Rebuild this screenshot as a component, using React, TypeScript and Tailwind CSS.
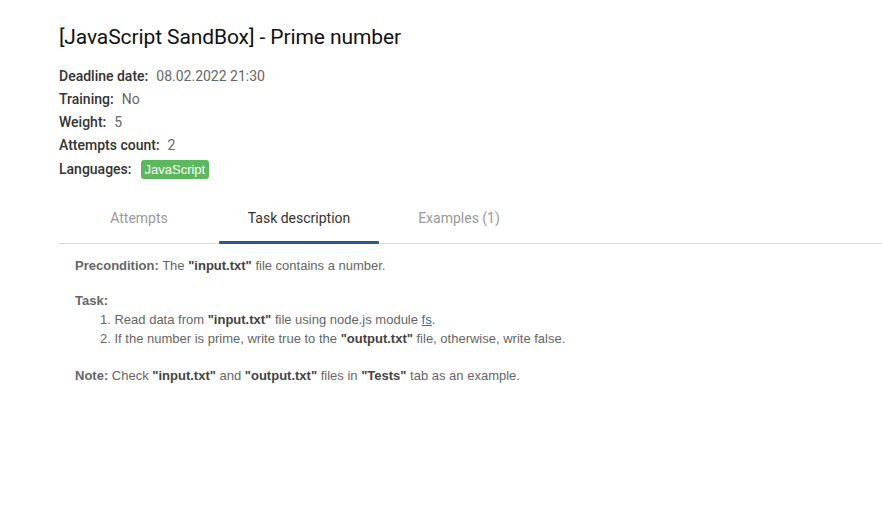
export default function App() {
  const info = [
    { label: 'Deadline date:', value: '08.02.2022 21:30' },
    { label: 'Training:', value: 'No' },
    { label: 'Weight:', value: '5' },
    { label: 'Attempts count:', value: '2' },
  ];

  return (
    <div className="w-[882px] h-[527px] bg-white overflow-hidden font-['Roboto',sans-serif]">
      <div className="pl-[59px] pt-[23px]">
        <h1 className="text-[21px] leading-[28px] font-normal text-[#111] tracking-[-0.1px]">
          [JavaScript SandBox] - Prime number
        </h1>

        {/* Task info */}
        <div className="mt-[14px] text-[14px] leading-[23px]">
          {info.map((row) => (
            <div key={row.label} className="flex">
              <span className="text-[#333] font-medium">{row.label}</span>
              <span className="ml-[8px] text-[#666]">{row.value}</span>
            </div>
          ))}
          <div className="flex items-center h-[24px]">
            <span className="text-[#333] font-medium">Languages:</span>
            <span className="ml-[9px] bg-[#5cb85c] text-white rounded-[3px] px-[4px] h-[19px] leading-[19px] text-[13px] font-['Liberation_Sans',sans-serif]">
              JavaScript
            </span>
          </div>
        </div>

        {/* Tabs */}
        <div className="mt-[27px] flex border-b border-[#dddddd] text-[14px]">
          <div className="w-[160px] text-center text-[#999] pb-[14px]">Attempts</div>
          <div className="w-[160px] text-center text-[#333] pb-[14px] relative">
            Task description
            <div className="absolute left-0 right-0 bottom-[-1px] h-[3px] bg-[#2c5a82] rounded-[1px]" />
          </div>
          <div className="w-[160px] text-center text-[#999] pb-[14px]">Examples (1)</div>
        </div>

        {/* Description */}
        <div className="pl-[16px] pt-[12px] text-[13px] leading-[19px] text-[#666] font-['Liberation_Sans',sans-serif]">
          <p>
            <b className="text-[#666]">Precondition:</b> The <b className="text-[#444]">"input.txt"</b> file contains a number.
          </p>
          <p className="mt-[16px]">
            <b className="text-[#666]">Task:</b>
          </p>
          <ol className="pl-[25px] list-decimal list-inside">
            <li>
              Read data from <b className="text-[#444]">"input.txt"</b> file using node.js module{' '}
              <a className="text-[#2a6fb0] underline">fs</a>.
            </li>
            <li>
              If the number is prime, write true to the <b className="text-[#444]">"output.txt"</b> file, otherwise, write false.
            </li>
          </ol>
          <p className="mt-[18px]">
            <b className="text-[#666]">Note:</b> Check <b className="text-[#444]">"input.txt"</b> and <b className="text-[#444]">"output.txt"</b> files in <b className="text-[#444]">"Tests"</b> tab as an example.
          </p>
        </div>
      </div>
    </div>
  );
}
